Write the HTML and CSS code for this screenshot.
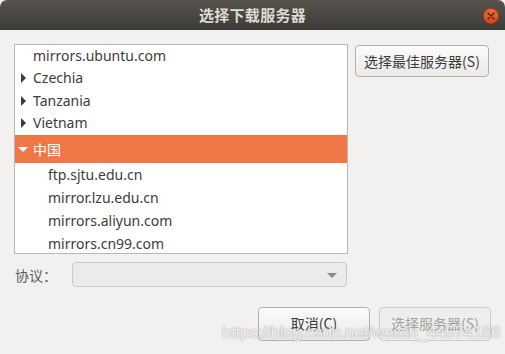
FILE: index.html
```html
<!DOCTYPE html>
<html>
<head>
<meta charset="utf-8">
<link rel="stylesheet" href="styles.css">
</head>
<body>
<div class="window">
  <div class="titlebar">
    <span class="title">选择下载服务器</span>
    <span class="close"><svg width="8" height="8" viewBox="0 0 8 8"><path d="M1 1L7 7M7 1L1 7" stroke="#3a2a22" stroke-width="1.3" stroke-linecap="round"/></svg></span>
  </div>
  <div class="content">
    <div class="top">
      <div class="list">
        <div class="row lvl0 short">mirrors.ubuntu.com</div>
        <div class="row lvl0"><span class="tri-right"></span>Czechia</div>
        <div class="row lvl0 short"><span class="tri-right"></span>Tanzania</div>
        <div class="row lvl0"><span class="tri-right"></span>Vietnam</div>
        <div class="row lvl0 sel"><span class="tri-down"></span>中国</div>
        <div class="row lvl1">ftp.sjtu.edu.cn</div>
        <div class="row lvl1">mirror.lzu.edu.cn</div>
        <div class="row lvl1">mirrors.aliyun.com</div>
        <div class="row lvl1">mirrors.cn99.com</div>
      </div>
      <div class="side">
        <button class="btn best">选择最佳服务器(S)</button>
      </div>
    </div>
    <div class="proto">
      <span class="label">协议：</span>
      <div class="combo"><span class="arrow"></span></div>
    </div>
    <div class="actions">
      <button class="btn act">取消(C)</button>
      <button class="btn act disabled">选择服务器(S)</button>
    </div>
  </div>
  <div class="watermark">https://blog.csdn.net/weixin_44574186</div>
</div>
</body>
</html>
```
FILE: styles.css
```css
* { box-sizing: border-box; }
html, body { margin: 0; padding: 0; background: #f2f1f0; }
body { width: 505px; height: 354px; overflow: hidden; font-family: "Noto Sans", "Noto Sans CJK SC", sans-serif; color: #3c3c3c; }
.window { position: relative; width: 505px; height: 354px; background: #f2f1f0; }
.titlebar {
  height: 30px; display: flex; align-items: center; justify-content: center; position: relative;
  background: linear-gradient(#57544e, #3c3b37);
  border-radius: 7px 7px 0 0;
}
.title { color: #dfdbd2; font-weight: bold; font-size: 15px; font-family: "Noto Sans CJK SC", sans-serif; letter-spacing: 0.3px; margin-top: -2px; }
.close {
  position: absolute; right: 6px; top: 8px; width: 16px; height: 16px; border-radius: 50%;
  background: linear-gradient(#f06a3b, #dc4a17); border: 1px solid #b43c12;
  display: flex; align-items: center; justify-content: center;
}
.content { padding: 14px 14px 0 14px; }
.top { display: flex; gap: 7px; }
.list {
  width: 334px; height: 210px; background: #fff; border: 1px solid #b9b7b3; overflow: hidden;
  font-size: 14px;
}
.row { height: 23px; display: flex; align-items: center; white-space: nowrap; position: relative; padding-bottom: 2px; }
.row.short { height: 22px; }
.lvl0 { padding-left: 18px; }
.lvl1 { padding-left: 33px; padding-bottom: 0; }
.row.sel { height: 28px; padding-bottom: 1px; background: #f07746; color: #fff; font-family: "Noto Sans CJK SC", sans-serif; }
.tri-right { position: absolute; left: 6px; top: 6px; width: 0; height: 0; border-top: 5px solid transparent; border-bottom: 5px solid transparent; border-left: 5px solid #3c3c3c; }
.tri-down { position: absolute; left: 3px; top: 12px; width: 0; height: 0; border-left: 5px solid transparent; border-right: 5px solid transparent; border-top: 5px solid #fff; }
.side { display: flex; flex-direction: column; padding-top: 1px; }
.btn {
  font-family: "Noto Sans CJK SC", sans-serif; font-size: 14px; color: #3c3c3c;
  background: linear-gradient(#fbfbfa, #eceae8); border: 1px solid #b4b1ac; border-radius: 4px;
  padding: 0; margin: 0;
}
.best { width: 134px; height: 32px; }
.proto { display: flex; align-items: center; margin-top: 8px; height: 25px; }
.label { width: 58px; padding-left: 1px; font-size: 14px; font-family: "Noto Sans CJK SC", sans-serif; color: #5a5a5a; }
.combo {
  width: 275px; height: 25px; background: #ecebea; border: 1px solid #cbc9c5; border-radius: 4px; position: relative;
}
.arrow { position: absolute; right: 9px; top: 10px; width: 0; height: 0; border-left: 5px solid transparent; border-right: 5px solid transparent; border-top: 5px solid #8e8c88; }
.actions { display: flex; justify-content: flex-end; gap: 9px; margin-top: 20px; }
.act { width: 112px; height: 34px; padding-bottom: 2px; }
.disabled { background: #efeeec; color: #a5a39f; border-color: #cfcdca; }
.watermark {
  position: absolute; left: 222px; top: 323px; font-family: "Liberation Sans", sans-serif; font-size: 17px;
  color: rgba(255,255,255,0.85); text-shadow: 0 0 1px rgba(120,120,120,0.6), 0 0 2px rgba(150,150,150,0.5);
  letter-spacing: -0.3px; white-space: nowrap;
}
```
